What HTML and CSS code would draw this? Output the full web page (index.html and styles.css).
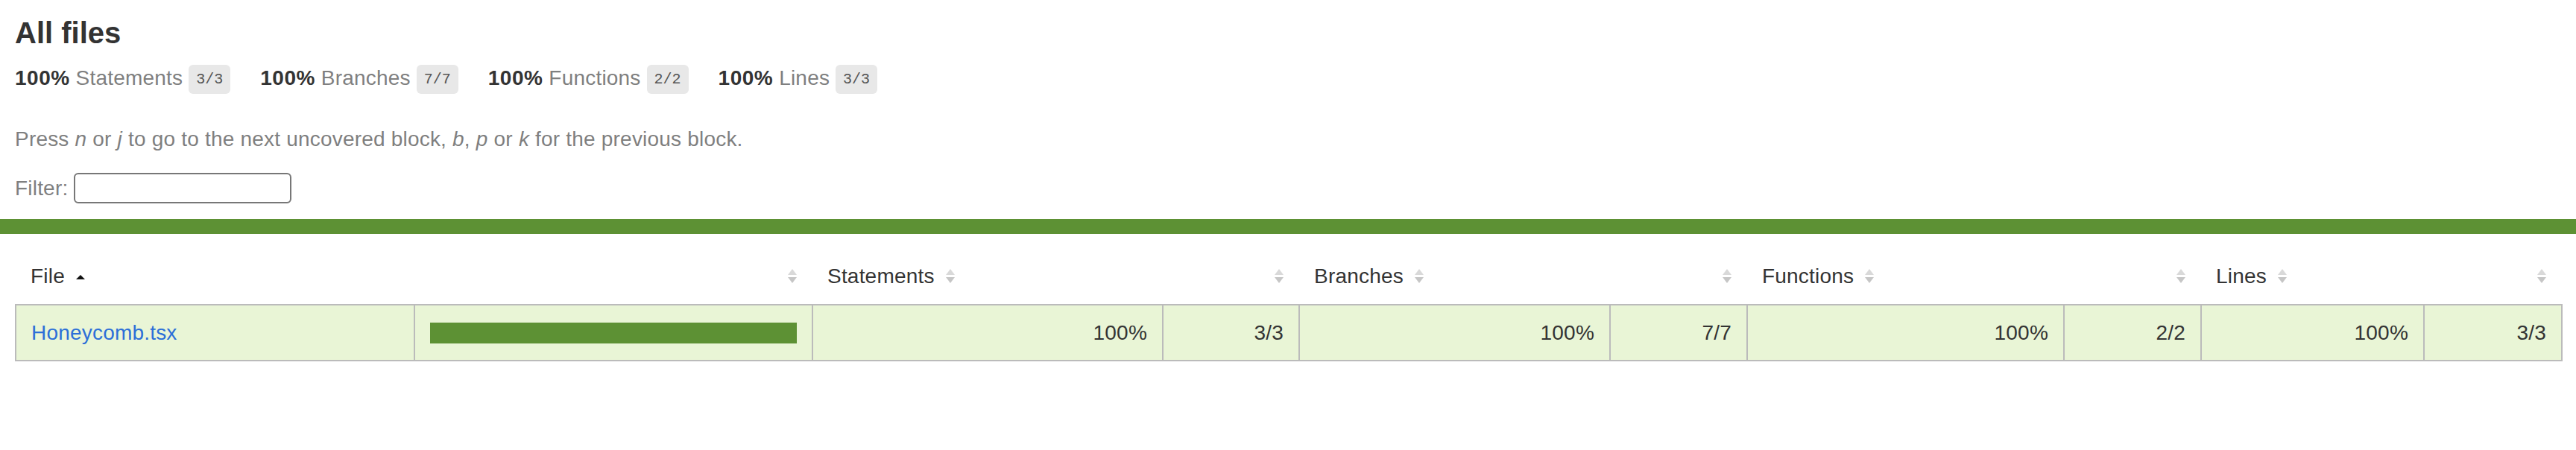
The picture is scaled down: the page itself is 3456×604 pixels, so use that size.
FILE: index.html
```html
<!doctype html>
<html lang="en">
<head>
<meta charset="utf-8">
<title>Code coverage report for All files</title>
<link rel="stylesheet" href="styles.css">
</head>
<body>
<div class="wrapper">
  <div class="pad1">
    <h1>All files</h1>
    <div class="summary">
      <div class="stat"><span class="strong">100%</span> <span class="quiet">Statements</span> <span class="fraction">3/3</span></div>
      <div class="stat"><span class="strong">100%</span> <span class="quiet">Branches</span> <span class="fraction">7/7</span></div>
      <div class="stat"><span class="strong">100%</span> <span class="quiet">Functions</span> <span class="fraction">2/2</span></div>
      <div class="stat"><span class="strong">100%</span> <span class="quiet">Lines</span> <span class="fraction">3/3</span></div>
    </div>
    <p class="quiet hint">Press <em>n</em> or <em>j</em> to go to the next uncovered block, <em>b</em>, <em>p</em> or <em>k</em> for the previous block.</p>
    <div class="quiet filter"><span>Filter:</span><input type="search" class="search"></div>
  </div>
  <div class="status-line high"></div>
  <div class="pad1">
    <table class="coverage-summary">
      <colgroup>
        <col class="w-file"><col class="w-pic"><col class="w-spct"><col class="w-abs1"><col class="w-bpct"><col class="w-abs2"><col class="w-fpct"><col class="w-abs3"><col class="w-lpct"><col class="w-abs4">
      </colgroup>
      <thead>
        <tr>
          <th class="file sorted">File<span class="sorter"><svg viewBox="0 0 14 20" width="14" height="20"><polygon points="1,15 13,15 7,9" fill="#111"/></svg></span></th>
          <th class="pic"><span class="sorter"><svg viewBox="0 0 14 20" width="14" height="20"><polygon points="7,1 13,9 1,9" fill="#d9d9d9"/><polygon points="1,12 13,12 7,20" fill="#c6c6c6"/></svg></span></th>
          <th class="pct">Statements<span class="sorter"><svg viewBox="0 0 14 20" width="14" height="20"><polygon points="7,1 13,9 1,9" fill="#d9d9d9"/><polygon points="1,12 13,12 7,20" fill="#c6c6c6"/></svg></span></th>
          <th class="abs"><span class="sorter"><svg viewBox="0 0 14 20" width="14" height="20"><polygon points="7,1 13,9 1,9" fill="#d9d9d9"/><polygon points="1,12 13,12 7,20" fill="#c6c6c6"/></svg></span></th>
          <th class="pct">Branches<span class="sorter"><svg viewBox="0 0 14 20" width="14" height="20"><polygon points="7,1 13,9 1,9" fill="#d9d9d9"/><polygon points="1,12 13,12 7,20" fill="#c6c6c6"/></svg></span></th>
          <th class="abs"><span class="sorter"><svg viewBox="0 0 14 20" width="14" height="20"><polygon points="7,1 13,9 1,9" fill="#d9d9d9"/><polygon points="1,12 13,12 7,20" fill="#c6c6c6"/></svg></span></th>
          <th class="pct">Functions<span class="sorter"><svg viewBox="0 0 14 20" width="14" height="20"><polygon points="7,1 13,9 1,9" fill="#d9d9d9"/><polygon points="1,12 13,12 7,20" fill="#c6c6c6"/></svg></span></th>
          <th class="abs"><span class="sorter"><svg viewBox="0 0 14 20" width="14" height="20"><polygon points="7,1 13,9 1,9" fill="#d9d9d9"/><polygon points="1,12 13,12 7,20" fill="#c6c6c6"/></svg></span></th>
          <th class="pct">Lines<span class="sorter"><svg viewBox="0 0 14 20" width="14" height="20"><polygon points="7,1 13,9 1,9" fill="#d9d9d9"/><polygon points="1,12 13,12 7,20" fill="#c6c6c6"/></svg></span></th>
          <th class="abs"><span class="sorter"><svg viewBox="0 0 14 20" width="14" height="20"><polygon points="7,1 13,9 1,9" fill="#d9d9d9"/><polygon points="1,12 13,12 7,20" fill="#c6c6c6"/></svg></span></th>
        </tr>
      </thead>
      <tbody>
        <tr>
          <td class="file high"><a href="#">Honeycomb.tsx</a></td>
          <td class="pic high"><div class="chart"><div class="cover-fill" style="width: 100%"></div></div></td>
          <td class="pct high">100%</td>
          <td class="abs high">3/3</td>
          <td class="pct high">100%</td>
          <td class="abs high">7/7</td>
          <td class="pct high">100%</td>
          <td class="abs high">2/2</td>
          <td class="pct high">100%</td>
          <td class="abs high">3/3</td>
        </tr>
      </tbody>
    </table>
  </div>
</div>
</body>
</html>
```
FILE: styles.css
```css
*, *::before, *::after { box-sizing: border-box; }
html, body { margin: 0; padding: 0; }
body {
  font-family: "Liberation Sans", Arial, Helvetica, sans-serif;
  font-size: 28px;
  line-height: 1.2;
  letter-spacing: 0.2px;
  color: #333;
  background: #fff;
}
.pad1 { padding: 20px; }
h1 { font-size: 40px; margin: 0; line-height: 1.2; font-weight: bold; letter-spacing: 0; }
.strong { font-weight: bold; letter-spacing: 0.5px; }
.quiet { color: #7f7f7f; }
.summary { display: flex; }
.stat { padding: 20px 40px 20px 0; white-space: nowrap; }
.fraction {
  font-family: "Liberation Mono", Consolas, monospace;
  font-size: 20px;
  letter-spacing: 0;
  color: #555;
  background: #e8e8e8;
  padding: 8px 10px;
  border-radius: 6px;
  vertical-align: middle;
}
.hint { margin: 28px 0; }
.filter { display: flex; align-items: center; gap: 8px; padding: 1px 0; }
.search {
  width: 292px;
  height: 41px;
  border: 2px solid #777;
  border-radius: 6px;
  padding: 2px 4px;
  font-size: 26px;
  font-family: inherit;
  background: #fff;
  margin: 0;
}
.status-line { height: 20px; }
.status-line.high { background: #5d9134; }

.coverage-summary {
  border-collapse: collapse;
  width: 100%;
  table-layout: fixed;
}
.w-file { width: 535px; }
.w-pic { width: 534px; }
.w-spct { width: 470px; }
.w-abs1 { width: 183px; }
.w-bpct { width: 417px; }
.w-abs2 { width: 184px; }
.w-fpct { width: 425px; }
.w-abs3 { width: 184px; }
.w-lpct { width: 299px; }
.w-abs4 { width: 185px; }
.coverage-summary tr { border-bottom: 2px solid #bbb; }
.coverage-summary tbody { border: 2px solid #bbb; }
.coverage-summary td, .coverage-summary th { padding: 20px; }
.coverage-summary td { border-right: 2px solid #bbb; }
.coverage-summary td:last-child { border-right: none; }
.coverage-summary th {
  text-align: left;
  font-weight: normal;
  white-space: nowrap;
}
.coverage-summary th.pic,
.coverage-summary th.abs,
.coverage-summary td.pct,
.coverage-summary td.abs { text-align: right; }
.coverage-summary td.file { white-space: nowrap; }
.sorter {
  display: inline-block;
  width: 14px;
  height: 20px;
  margin-left: 14px;
}
.sorter svg { display: block; }
.high { background: #e9f5d6; }
a { color: #2c6fd8; text-decoration: none; }
.chart { line-height: 0; border: 2px solid #5d9134; }
.cover-fill { display: inline-block; height: 24px; background: #5d9134; }
```
